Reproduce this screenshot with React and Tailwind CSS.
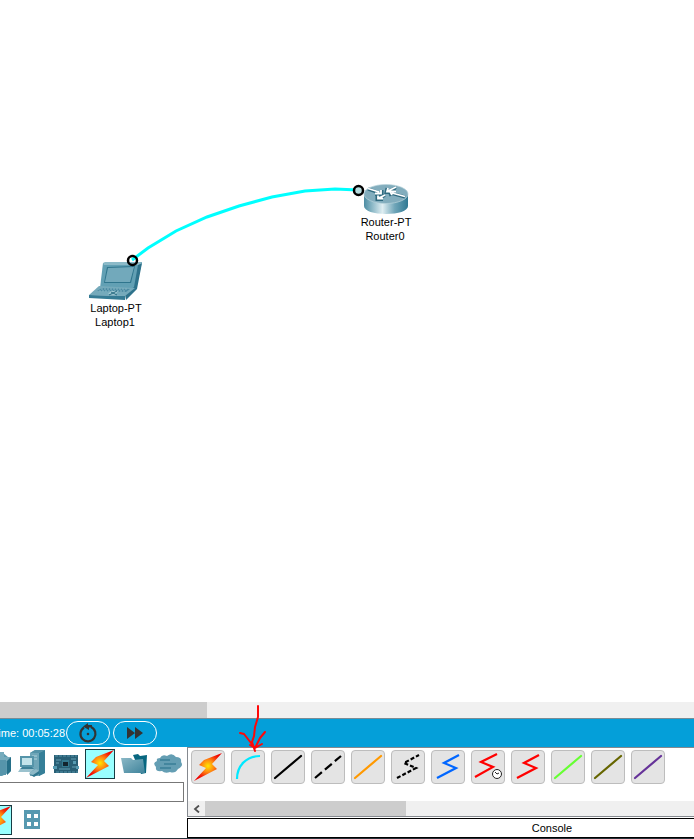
import React from "react";

function Defs() {
  return (
    <svg width="0" height="0" className="absolute" aria-hidden="true">
      <defs>
        <radialGradient id="bolt" gradientUnits="userSpaceOnUse" cx="15" cy="14" r="15">
          <stop offset="0" stopColor="#ffe600" />
          <stop offset="0.4" stopColor="#ff8a10" />
          <stop offset="0.75" stopColor="#f52a08" />
          <stop offset="1" stopColor="#ee0000" />
        </radialGradient>
        <linearGradient id="drum" x1="0" x2="1">
          <stop offset="0" stopColor="#4d8da3" />
          <stop offset="0.15" stopColor="#7fb0c0" />
          <stop offset="0.42" stopColor="#dfeef2" />
          <stop offset="0.7" stopColor="#6fa5b8" />
          <stop offset="1" stopColor="#2f7892" />
        </linearGradient>
        <linearGradient id="steel" x1="0" x2="1" y2="1">
          <stop offset="0" stopColor="#8ab8c6" />
          <stop offset="1" stopColor="#3f839b" />
        </linearGradient>
      </defs>
    </svg>
  );
}

const Bolt = () => (
  <svg viewBox="0 0 30 30" className="block size-[30px] shrink-0">
    <path d="M29 1 L11 8 L6 13 L13 16 L1 29 L24 17 L19 12 Z" fill="url(#bolt)" />
  </svg>
);

const Hub = () => (
  <svg viewBox="0 0 30 30" className="block size-[30px]">
    <path d="M0 10 L20 4 L25 8 V24 L19 27 L0 27Z" fill="#5b9aaf" />
    <path d="M16 3 L21 3 L21 8 L28 8 V22 L24 26 V12 L16 12Z" fill="#76abbc" />
    <path d="M24 12 L28 8 V22 L24 26Z" fill="#256f88" />
    <path d="M15 11 H23 V26 H15Z" fill="#5695ab" />
  </svg>
);

const Computer = () => (
  <svg viewBox="0 0 30 30" className="block size-[30px]">
    <path d="M13 4 L18 1 H28 V24 L22 27 H13Z" fill="#6fa6b8" />
    <path d="M22 4 L28 1 V24 L22 27Z" fill="#357f98" />
    <path d="M13 4 L18 1 H28 L22 4Z" fill="#5493a8" />
    <path d="M15 7 H20 M15 10 H20" stroke="#b3d3dc" />
    <path d="M3 7 H17 V18 H3Z" fill="#5594a9" />
    <path d="M5 9 H15 V16 H5Z" fill="#c3e3ea" />
    <path d="M5 18 H15 L17 20 H3Z" fill="#3d8097" />
    <path d="M3 20 H17 L14 23 H1Z" fill="#9bc2ce" />
    <path d="M12 24 L19 20 L22 22 L20 26 L14 27Z" fill="#8db9c7" />
    <path d="M12 25 L16 26 L22 22 V25 L17 28Z" fill="#2f768e" />
  </svg>
);

const Board = () => (
  <svg viewBox="0 0 30 30" className="block size-[30px]">
    <path d="M3 6 H27 V24 H3Z" fill="#285f75" />
    <path d="M4 7 H26 M5 23 H27" stroke="#5593aa" strokeWidth="1" strokeDasharray="3 1" />
    <path d="M5 11 H10 M5 14 H8 M20 10 H25 M21 18 H26 M8 20 H19" stroke="#64a0b5" strokeWidth="1" fill="none" />
    <path d="M22 12 H25 V15 H22Z M2 17 H6 V20 H2Z M25 17 H28 V20 H25Z" fill="#569bb2" />
    <path d="M11 11 H18 V18 H11Z" fill="#33798f" />
    <path d="M12 13 H17 V17 H12Z" fill="#12242e" />
  </svg>
);

const Folder = () => (
  <svg viewBox="0 0 30 30" className="block size-[30px]">
    <path d="M14 6 L19 5 L21 7 L28 6 L27 24 L22 25Z" fill="#086780" />
    <path d="M2 9 L12 9 L14 11 L24 10 L26 24 L5 24Z" fill="url(#steel)" />
  </svg>
);

const Cloud = () => (
  <svg viewBox="0 0 30 30" className="block size-[30px]">
    <path d="M7 9 Q9 5 14 7 Q19 3 23 8 Q29 8 28 13 Q31 17 25 20 Q22 25 17 23 Q12 25 9 22 Q2 23 3 18 Q-1 14 4 12 Q3 9 7 9Z" fill="#649eb3" />
    <path d="M7 11 H17 M11 15 H23 M7 19 H18" stroke="#397f98" strokeWidth="1.5" />
  </svg>
);

const Grid = () => (
  <svg viewBox="0 0 30 30" className="block size-[30px]">
    <path d="M7 5 H23 V24 H7Z" fill="#5799b0" />
    <path d="M10 9 H14 V13 H10Z M17 9 H21 V13 H17Z M10 17 H14 V21 H10Z M17 17 H21 V21 H17Z" fill="#fff" />
  </svg>
);

const CableLine = ({ color, dash }) => (
  <svg viewBox="0 0 30 30" className="block size-[30px]">
    <path d="M2 26 L28 4" stroke={color} strokeWidth="2.2" strokeLinecap={dash ? "butt" : "round"} strokeDasharray={dash} />
  </svg>
);

const ZigZag = ({ color, dash, clock }) => (
  <svg viewBox="0 0 30 30" className="block size-[30px]" fill="none">
    <path
      d={clock ? "M2 25 L20 15 L8 10 L24 2" : "M4 26 L23 16 L11 11 L26 3"}
      stroke={color}
      strokeWidth="2.2"
      strokeDasharray={dash}
    />
    {clock && (
      <>
        <circle cx="24" cy="22" r="4.5" fill="#fff" stroke="#222" />
        <path d="M22 20 L24 22 L26 21" stroke="#222" />
      </>
    )}
  </svg>
);

const Arc = () => (
  <svg viewBox="0 0 30 30" className="block size-[30px]" fill="none">
    <path d="M4 27 C4 14 13 4 27 4" stroke="#00e8ff" strokeWidth="2.2" />
  </svg>
);

const cables = [
  ["Automatic", <Bolt />],
  ["Console", <Arc />],
  ["Copper straight-through", <CableLine color="#000" />],
  ["Copper cross-over", <CableLine color="#000" dash="9 4" />],
  ["Fiber", <CableLine color="#ff9900" />],
  ["Phone", <ZigZag color="#000" dash="4 2" />],
  ["Coaxial", <ZigZag color="#0066ff" />],
  ["Serial DCE", <ZigZag color="#ff0000" clock />],
  ["Serial DTE", <ZigZag color="#ff0000" />],
  ["Octal", <CableLine color="#66ff33" />],
  ["IoT custom", <CableLine color="#666600" />],
  ["USB", <CableLine color="#663399" />],
];

const categories = [
  ["Network devices", <Hub />],
  ["End devices", <Computer />],
  ["Components", <Board />],
  ["Connections", <Bolt />],
  ["Miscellaneous", <Folder />],
  ["Multiuser", <Cloud />],
];

function IconButton({ label, selected, children }) {
  return (
    <button
      type="button"
      aria-label={label}
      className={
        "flex size-[30px] shrink-0 items-center justify-center overflow-hidden " +
        (selected ? "border border-[#163c44] bg-[#99ffff]" : "")
      }
    >
      {children}
    </button>
  );
}

function Laptop() {
  return (
    <div className="absolute left-[76px] top-[261px] flex w-20 flex-col items-center text-center">
      <svg viewBox="0 0 56 40" className="block h-10 w-14">
        <path d="M15 2 L54 1 L48 27 L12 27Z" fill="#62a0b4" />
        <path d="M50 4 L54 2 L49 28 L38 39 L37 34 L46 26Z" fill="#2e728b" />
        <path d="M15 2 L17 1 H52 L54 2 L50 4 H16Z" fill="#8cbac8" />
        <path d="M19 6 L47 5 L43 22 L16 22Z" fill="#2f758d" />
        <path d="M20 7 L46 6 L42 21 L17 21Z" fill="#72a9bb" />
        <path d="M11 25 L47 27 L37 35 L1 34Z" fill="#75aabb" />
        <path d="M14 27 L42 28 L38 31 L9 30Z" fill="#4c8ba3" />
        <path d="M13 28 H40 M11 30 H38" stroke="#86b6c4" strokeDasharray="2 1" />
        <path d="M1 34 L37 35 V39 L1 37Z" fill="#357b94" />
        <path d="M20 33 L23 30 H30 L27 34Z" fill="#a1c9d4" />
        <path d="M21 34 L29 30 M23 31 L29 34" stroke="#286c82" />
      </svg>
      <span className="leading-[14px]">Laptop-PT</span>
      <span className="-ml-0.5 leading-[14px]">Laptop1</span>
    </div>
  );
}

function Router() {
  return (
    <div className="absolute left-[346px] top-[183px] flex w-20 flex-col items-center text-center">
      <svg viewBox="0 0 46 32" className="block h-8 w-[46px]">
        <path d="M1 11 V23 C1 28 11 31 23 31 S45 28 45 23 V11Z" fill="url(#drum)" />
        <ellipse cx="23" cy="11" rx="22" ry="9.5" fill="#82adbd" stroke="#b8d2db" strokeWidth="0.7" />
        <g fill="none" stroke="#2f6a7f" strokeWidth="3">
          <path d="M5 6 L15 9.5 M19 7 V11.5 H12 M33 4.5 L25 8.5 M24 5 L23 9.5 L29 9.5 M42 14 L29 10.5 M33 8 H26 L28 13 M22 12.5 L16 15.5 M14 12.5 V16.5 H20" />
        </g>
        <g fill="none" stroke="#fff" strokeWidth="1.8">
          <path d="M5 5.5 L16 9 M18 7 V10.5 H12 M33 4 L25 8 M25 5 L24 8.5 L29 8.5 M42 13.5 L29 10 M33 8.5 H27 L29 12 M22 12 L16 15 M15 12.5 V15.5 H20" />
        </g>
      </svg>
      <span className="leading-[14px]">Router-PT</span>
      <span className="-ml-0.5 leading-[14px]">Router0</span>
    </div>
  );
}

export default function App() {
  return (
    <div className="relative flex min-h-screen w-full flex-col overflow-hidden bg-white font-['Liberation_Sans',Arial,sans-serif] text-[11px] text-black">
      <Defs />
      <main className="relative min-h-[340px] flex-1">
        <Router />
        <Laptop />
        <svg width="420" height="280" className="absolute left-0 top-0" fill="none">
          <path d="M132 260 L148 248 L176 231 L207 217 L239 206 L272 197 L305 191 L335 189 L358 190" stroke="#00ffff" strokeWidth="3" />
          <circle cx="132.5" cy="260.5" r="4.5" stroke="#000" strokeWidth="2.5" />
          <circle cx="358.5" cy="190.5" r="4.5" fill="#b8dde0" stroke="#000" strokeWidth="2.5" />
        </svg>
      </main>

      <div className="h-4 bg-[#f0f0f0]">
        <div className="h-full w-[207px] bg-[#cdcdcd]" />
      </div>

      <header className="relative flex h-[29px] items-center border-t border-[#788c96] bg-[#049fd9] text-white">
        <div className="flex w-[66px] justify-end overflow-hidden whitespace-nowrap pr-px">Time: 00:05:28</div>
        <div className="flex gap-[3px]">
          <button type="button" aria-label="Power cycle devices" className="flex h-6 w-11 items-center justify-center rounded-full border border-white">
            <svg viewBox="0 0 20 20" className="size-5" fill="none">
              <path d="M6 4.5 A7.5 7.5 0 1 0 13 4" stroke="#333" strokeWidth="2.2" />
              <path d="M5 3.5 L10 0 V2 H14 V4.5 H11 V7Z" fill="#333" />
              <circle cx="10" cy="11" r="1.3" fill="#333" />
            </svg>
          </button>
          <button type="button" aria-label="Fast forward time" className="flex h-6 w-11 items-center justify-center rounded-full border border-white">
            <svg viewBox="0 0 18 12" className="h-3 w-[18px]">
              <path d="M1 0 L9 6 L1 12Z M9 0 L17 6 L9 12Z" fill="#333" />
            </svg>
          </button>
        </div>
        <svg width="32" height="48" className="absolute -top-3.5 left-[238px] z-10" fill="none">
          <path d="M20 1 V12 L17 22 L16 31 L14 37 L17 46 M2 28 L6 29 L17 43 L22 33 L27 27 M12 40 L17 43 L24 39" stroke="#ff0808" strokeWidth="2" strokeLinejoin="round" strokeLinecap="round" />
        </svg>
      </header>

      <footer className="flex h-[92px] border-b border-[#26323a]">
        <section className="flex w-[187px] shrink-0 flex-col gap-[3px] overflow-hidden pt-0.5">
          <div className="flex justify-end gap-1 pr-1">
            {categories.map(([label, icon]) => (
              <IconButton key={label} label={label} selected={label === "Connections"}>{icon}</IconButton>
            ))}
          </div>
          <input aria-label="Search devices" className="-ml-1 mr-[3px] h-5 border border-[#777] bg-white px-1 outline-none" />
          <div className="flex w-[47px] justify-end gap-[5px]">
            <IconButton label="Connections" selected><Bolt /></IconButton>
            <IconButton label="Structured cabling"><Grid /></IconButton>
          </div>
        </section>
        <section className="flex min-w-0 flex-1 flex-col">
          <div className="flex flex-1 flex-col justify-between overflow-hidden border border-r-0 border-[#85898f]">
            <div className="flex gap-1.5 pl-[3px] pt-0.5">
              {cables.map(([label, icon]) => (
                <button
                  key={label}
                  type="button"
                  aria-label={label}
                  className="flex size-[34px] shrink-0 items-center justify-center rounded border border-[#bdbdbd] bg-[#e4e4e4]"
                >
                  {icon}
                </button>
              ))}
            </div>
            <div className="flex h-[15px] bg-[#f0f0f0]">
              <button type="button" aria-label="Scroll left" className="flex w-[17px] items-center justify-center">
                <svg viewBox="0 0 8 8" className="size-2" fill="none">
                  <path d="M6 0.5 L2 4 L6 7.5" stroke="#505050" strokeWidth="1.8" />
                </svg>
              </button>
              <div className="w-[201px] bg-[#cdcdcd]" />
            </div>
          </div>
          <div className="mt-px flex h-5 items-center justify-center border border-r-0 border-black pl-[222px]">Console</div>
        </section>
      </footer>
    </div>
  );
}
